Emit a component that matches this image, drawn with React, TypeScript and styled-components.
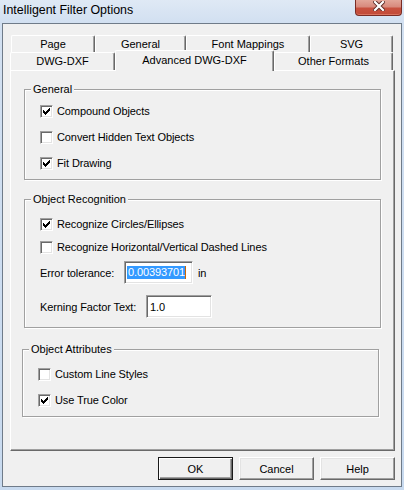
import React from "react";
import styled, { createGlobalStyle, css } from "styled-components";

const GlobalStyle = createGlobalStyle`
  body {
    margin: 0;
    background: #fff;
  }
  * {
    box-sizing: border-box;
  }
`;

const Window = styled.div`
  width: 404px;
  height: 490px;
  display: flex;
  flex-direction: column;
  padding: 0 2px 3px 2px;
  background: linear-gradient(180deg, #dfe9f5 0, #d2e0f1 22px, #c8daef 100%);
  font-family: "Liberation Sans", Arial, sans-serif;
  font-size: 11px;
  color: #000;
`;

const TitleBar = styled.div`
  height: 23px;
  display: flex;
  justify-content: space-between;
  align-items: flex-start;
  padding-left: 1px;
`;

const Title = styled.div`
  font-size: 12.4px;
  line-height: 14px;
  padding-top: 3px;
`;

const CloseButton = styled.div`
  width: 47px;
  height: 16px;
  display: flex;
  align-items: center;
  justify-content: center;
  border: 1px solid #7a2c24;
  border-top: none;
  border-radius: 0 0 4px 4px;
  background: linear-gradient(180deg, #e2a699 0, #d88a7d 45%, #c8513f 55%, #c24a37 100%);
  box-shadow: inset 0 -1px #d9735f;
  padding-bottom: 4px;
`;

const Client = styled.div`
  flex: 1;
  display: flex;
  flex-direction: column;
  background: #f0f0f0;
  border: 1px solid #6f7b89;
  padding: 11px 6px 6px 7px;
`;

const TabRow = styled.div<{ $indent?: number; $h: number }>`
  display: flex;
  height: ${(p) => p.$h}px;
  padding-left: ${(p) => p.$indent ?? 0}px;
`;

const Tab = styled.div<{ $w: number; $h: number; $active?: boolean }>`
  width: ${(p) => p.$w}px;
  height: ${(p) => p.$h}px;
  display: flex;
  align-items: center;
  justify-content: center;
  background: #f0f0f0;
  border-top: 1px solid #fff;
  border-left: 1px solid #fff;
  border-right: 1px solid #696969;
  border-radius: 2px 2px 0 0;
  box-shadow: inset -1px 0 #a0a0a0;
  white-space: nowrap;
  padding-bottom: 1px;
  ${(p) =>
    p.$active &&
    css`
      height: ${p.$h + 3}px;
      margin-top: -2px;
      margin-bottom: -1px;
      position: relative;
      z-index: 1;
      padding-bottom: 2px;
    `}
`;

const Panel = styled.div`
  flex: 1;
  display: flex;
  flex-direction: column;
  border-top: 1px solid #fff;
  border-left: 1px solid #fff;
  border-right: 1px solid #696969;
  border-bottom: 1px solid #696969;
  box-shadow: inset -1px -1px #a0a0a0;
`;

const Group = styled.div<{ $top: number; $left: number; $right: number; $pb: number }>`
  display: flex;
  flex-direction: column;
  margin: ${(p) => p.$top}px ${(p) => p.$right}px 0 ${(p) => p.$left}px;
  padding: 0 0 ${(p) => p.$pb}px 15px;
  border: 1px solid #a0a0a0;
  box-shadow: inset 1px 1px #fff, 1px 1px #fff;
`;

const GroupTitle = styled.div`
  align-self: flex-start;
  margin: -7px 0 0 -9px;
  padding: 0 2px;
  line-height: 13px;
  background: #f0f0f0;
`;

const Row = styled.div<{ $h: number; $mt?: number }>`
  height: ${(p) => p.$h}px;
  margin-top: ${(p) => p.$mt ?? 0}px;
  display: flex;
  align-items: center;
  gap: 4px;
  white-space: nowrap;
  letter-spacing: -0.1px;
`;

const Box = styled.div`
  width: 13px;
  height: 13px;
  flex: none;
  background: #fff;
  border: 1px solid;
  border-color: #a0a0a0 #fff #fff #a0a0a0;
  box-shadow: inset 1px 1px #696969, inset -1px -1px #e3e3e3;
  display: flex;
  align-items: center;
  justify-content: center;
`;

const FieldLabel = styled.div<{ $w: number }>`
  width: ${(p) => p.$w}px;
  flex: none;
`;

const TextBox = styled.div<{ $w: number }>`
  width: ${(p) => p.$w}px;
  height: 23px;
  flex: none;
  display: flex;
  align-items: center;
  padding: 0 2px 0 3px;
  background: #fff;
  border: 1px solid;
  border-color: #a0a0a0 #fff #fff #a0a0a0;
  box-shadow: inset 1px 1px #696969, inset -1px -1px #e3e3e3;
`;

const Selected = styled.span`
  background: #3399ff;
  color: #fff;
  line-height: 13px;
  margin-left: -1px;
  padding-left: 1px;
  border-right: 1px solid #cc6600;
`;

const Unit = styled.span`
  margin-left: 1px;
`;

const ButtonRow = styled.div`
  display: flex;
  justify-content: flex-end;
  gap: 6px;
  margin-top: 6px;
`;

const Button = styled.div<{ $default?: boolean }>`
  width: 75px;
  height: 23px;
  display: flex;
  align-items: center;
  justify-content: center;
  background: #f0f0f0;
  border: 1px solid;
  border-color: #fff #696969 #696969 #fff;
  box-shadow: inset -1px -1px #a0a0a0, inset 1px 1px #e3e3e3;
  ${(p) =>
    p.$default &&
    css`
      border-color: #1a1a1a;
      box-shadow: inset 1px 1px #fff, inset -1px -1px #696969, inset -2px -2px #a0a0a0;
    `}
`;

function CheckMark() {
  return (
    <svg width="7" height="7" viewBox="0 0 7 7" shapeRendering="crispEdges">
      <polygon points="0,2 2,4 7,-1 7,2 2,7 0,5" fill="#000" />
    </svg>
  );
}

function Check({ label, checked }: { label: string; checked?: boolean }) {
  return (
    <>
      <Box>{checked && <CheckMark />}</Box>
      <span>{label}</span>
    </>
  );
}

function CloseX() {
  return (
    <svg width="12" height="10" viewBox="0 0 12 10">
      <path d="M2 1 L10 9 M10 1 L2 9" stroke="#5a2a26" strokeWidth="4" strokeLinecap="square" />
      <path d="M2 1 L10 9 M10 1 L2 9" stroke="#fff" strokeWidth="2.2" strokeLinecap="square" />
    </svg>
  );
}

const topTabs = [
  { label: "Page", w: 84 },
  { label: "General", w: 91 },
  { label: "Font Mappings", w: 124 },
  { label: "SVG", w: 83 },
];

const bottomTabs = [
  { label: "DWG-DXF", w: 105 },
  { label: "Advanced DWG-DXF", w: 159, active: true },
  { label: "Other Formats", w: 119 },
];

export default function App() {
  return (
    <>
      <GlobalStyle />
      <Window>
        <TitleBar>
          <Title>Intelligent Filter Options</Title>
          <CloseButton>
            <CloseX />
          </CloseButton>
        </TitleBar>
        <Client>
          <TabRow $h={17} $indent={1}>
            {topTabs.map((t) => (
              <Tab key={t.label} $w={t.w} $h={17}>
                {t.label}
              </Tab>
            ))}
          </TabRow>
          <TabRow $h={18}>
            {bottomTabs.map((t) => (
              <Tab key={t.label} $w={t.w} $h={18} $active={t.active}>
                {t.label}
              </Tab>
            ))}
          </TabRow>
          <Panel>
            <Group $top={18} $left={13} $right={13} $pb={3}>
              <GroupTitle>General</GroupTitle>
              <Row $h={26} $mt={2}>
                <Check label="Compound Objects" checked />
              </Row>
              <Row $h={26}>
                <Check label="Convert Hidden Text Objects" />
              </Row>
              <Row $h={26}>
                <Check label="Fit Drawing" checked />
              </Row>
            </Group>

            <Group $top={19} $left={13} $right={13} $pb={9}>
              <GroupTitle>Object Recognition</GroupTitle>
              <Row $h={24} $mt={6}>
                <Check label="Recognize Circles/Ellipses" checked />
              </Row>
              <Row $h={22}>
                <Check label="Recognize Horizontal/Vertical Dashed Lines" />
              </Row>
              <Row $h={23} $mt={3}>
                <FieldLabel $w={80}>Error tolerance:</FieldLabel>
                <TextBox $w={69}>
                  <Selected>0.00393701</Selected>
                </TextBox>
                <Unit>in</Unit>
              </Row>
              <Row $h={23} $mt={11}>
                <FieldLabel $w={102}>Kerning Factor Text:</FieldLabel>
                <TextBox $w={66}>1.0</TextBox>
              </Row>
            </Group>

            <Group $top={21} $left={11} $right={15} $pb={3}>
              <GroupTitle>Object Attributes</GroupTitle>
              <Row $h={26} $mt={5}>
                <Check label="Custom Line Styles" />
              </Row>
              <Row $h={26}>
                <Check label="Use True Color" checked />
              </Row>
            </Group>
          </Panel>
          <ButtonRow>
            <Button $default>OK</Button>
            <Button>Cancel</Button>
            <Button>Help</Button>
          </ButtonRow>
        </Client>
      </Window>
    </>
  );
}
